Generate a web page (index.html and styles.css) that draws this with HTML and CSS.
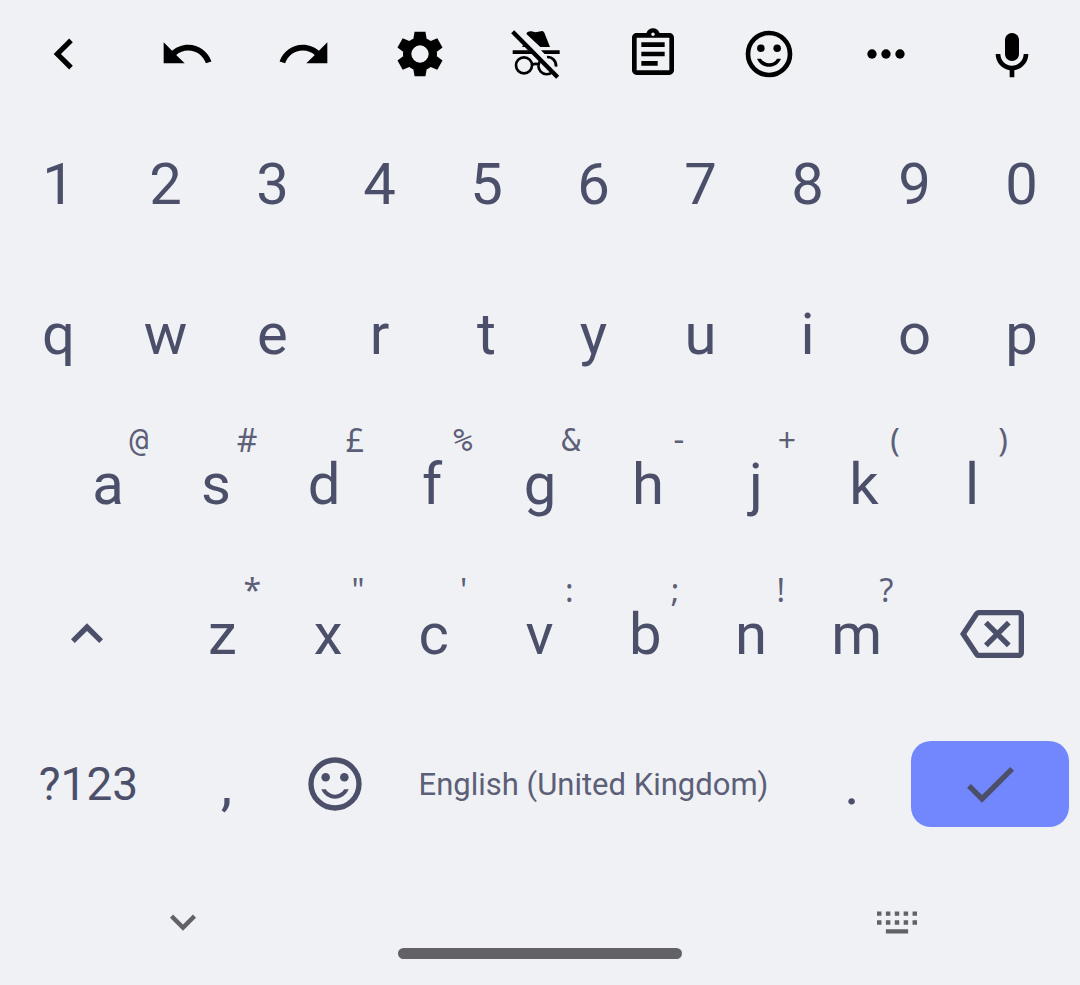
FILE: index.html
```html
<!DOCTYPE html>
<html lang="en-GB">
<head>
<meta charset="utf-8">
<meta name="viewport" content="width=device-width, initial-scale=1">
<title>Keyboard</title>
<link rel="stylesheet" href="styles.css">
</head>
<body>
<main class="keyboard">
  <div class="toolbar" role="toolbar" aria-label="Keyboard tools">
    <button class="tool" aria-label="Collapse toolbar"><svg class="icon icon-large" viewBox="0 0 24 24"><path d="M15.41 7.41 14 6l-6 6 6 6 1.41-1.41L10.83 12z"/></svg></button>
    <button class="tool" aria-label="Undo"><svg class="icon" viewBox="0 0 24 24"><path d="M12.5 8c-2.65 0-5.05.99-6.9 2.6L2 7v9h9l-3.62-3.62c1.39-1.16 3.16-1.88 5.12-1.88 3.54 0 6.55 2.31 7.6 5.5l2.37-.78C21.08 11.03 17.15 8 12.5 8z"/></svg></button>
    <button class="tool" aria-label="Redo"><svg class="icon" viewBox="0 0 24 24"><path d="M18.4 10.6C16.55 8.99 14.15 8 11.5 8c-4.65 0-8.58 3.03-9.96 7.22L3.9 16c1.05-3.19 4.05-5.5 7.6-5.5 1.95 0 3.73.72 5.12 1.88L13 16h9V7l-3.6 3.6z"/></svg></button>
    <button class="tool" aria-label="Settings"><svg class="icon" viewBox="-.3 -.3 24.6 24.6"><path fill-rule="evenodd" d="M9.600 2.200h4.800l.5 3.100c.7.3 1.300.6 1.800 1l2.900-1.200 2.300 4-2.500 1.900a7 7 0 0 1 0 2l2.500 1.900-2.300 4-2.900-1.200c-.5.4-1.100.8-1.800 1.100l-.5 3H9.600l-.5-3c-.7-.3-1.300-.7-1.800-1.100l-2.900 1.200-2.300-4L4.600 13a7 7 0 0 1 0-2L2.100 9.100l2.300-4 2.900 1.200c.5-.4 1.100-.7 1.800-1zM12 8.200a3.800 3.800 0 1 0 0 7.600 3.800 3.800 0 0 0 0-7.600z"/></svg></button>
    <button class="tool" aria-label="Incognito off"><svg class="icon" viewBox="444 78 168 168"><path d="M500 98Q506 92 514 94L527 97 542 94Q550 91 553 98L570 141H541L500 103zM486 140l8-8 9 9h-17z"/><path d="M458 151h53l11 11h-64zM543 151h56v11h-45z"/><g class="outline"><circle cx="492" cy="196" r="24"/><path d="M517 194q10-5 20 0M543 180a24 24 0 1 0 34 36M561 171a26 26 0 0 1 27 29"/></g><path class="slash" d="m458 95 135 137"/></svg></button>
    <button class="tool" aria-label="Clipboard"><svg class="icon" viewBox="0 0 24 24"><path d="M7 15h7v2H7zm0-4h10v2H7zm0-4h10v2H7z"/><path fill-rule="evenodd" d="M19 3h-4.180C14.400 1.840 13.300 1 12 1c-1.300 0-2.400.84-2.820 2H5c-1.100 0-2 .9-2 2v14c0 1.100.9 2 2 2h14c1.100 0 2-.9 2-2V5c0-1.100-.9-2-2-2zm-7-.25c.41 0 .75.34.75.75s-.34.75-.75.75-.75-.34-.75-.75.34-.75.75-.75zM19 19H5V5h14v14z"/></svg></button>
    <button class="tool" aria-label="Emoji"><svg class="icon" viewBox="0 0 24 24"><circle class="ring" cx="12" cy="12" r="9"/><circle cx="8.500" cy="9.500" r="1.600"/><circle cx="15.500" cy="9.500" r="1.600"/><path d="M12 16c-1.480 0-2.750-.81-3.450-2H6.880c.8 2.050 2.790 3.500 5.120 3.500s4.320-1.450 5.120-3.500h-1.670c-.7 1.190-1.970 2-3.450 2z"/></svg></button>
    <button class="tool" aria-label="More"><svg class="icon" viewBox="0 0 24 24"><circle cx="6" cy="12" r="2"/><circle cx="12" cy="12" r="2"/><circle cx="18" cy="12" r="2"/></svg></button>
    <button class="tool" aria-label="Voice input"><svg class="icon" viewBox="0 -1 24 24"><path d="M12 14c1.660 0 3-1.340 3-3V5c0-1.660-1.340-3-3-3S9 3.340 9 5v6c0 1.660 1.340 3 3 3z"/><path d="M17 11c0 2.760-2.240 5-5 5s-5-2.240-5-5H5c0 3.530 2.610 6.430 6 6.920V21h2v-3.080c3.390-.49 6-3.390 6-6.920h-2z"/></svg></button>
  </div>

  <div class="row row-ten">
    <button class="key">1</button><button class="key">2</button><button class="key">3</button><button class="key">4</button><button class="key">5</button><button class="key">6</button><button class="key">7</button><button class="key">8</button><button class="key">9</button><button class="key">0</button>
  </div>

  <div class="row row-ten">
    <button class="key">q</button><button class="key">w</button><button class="key">e</button><button class="key">r</button><button class="key">t</button><button class="key">y</button><button class="key">u</button><button class="key">i</button><button class="key">o</button><button class="key">p</button>
  </div>

  <div class="row row-home">
    <button class="key">a<span class="hint hint-mono">@</span></button>
    <button class="key">s<span class="hint">#</span></button>
    <button class="key">d<span class="hint">£</span></button>
    <button class="key">f<span class="hint hint-mono">%</span></button>
    <button class="key">g<span class="hint hint-mono">&amp;</span></button>
    <button class="key">h<span class="hint hint-mono">-</span></button>
    <button class="key">j<span class="hint">+</span></button>
    <button class="key">k<span class="hint">(</span></button>
    <button class="key">l<span class="hint">)</span></button>
  </div>

  <div class="row row-shift">
    <button class="key" aria-label="Shift"><svg class="icon icon-key" viewBox="0 0 24 24"><path d="m12 8-6 6 1.410 1.410L12 10.830l4.590 4.580L18 14z"/></svg></button>
    <button class="key">z<span class="hint">*</span></button>
    <button class="key">x<span class="hint">"</span></button>
    <button class="key">c<span class="hint">'</span></button>
    <button class="key">v<span class="hint">:</span></button>
    <button class="key">b<span class="hint">;</span></button>
    <button class="key">n<span class="hint">!</span></button>
    <button class="key">m<span class="hint">?</span></button>
    <button class="key" aria-label="Backspace"><svg class="icon icon-key" viewBox="0 0 24 24"><path fill-rule="evenodd" d="M22 3H7c-.69 0-1.230.35-1.590.88L0 12l5.410 8.110c.36.53.9.89 1.590.89h15c1.100 0 2-.9 2-2V5c0-1.100-.9-2-2-2zm0 16H7.070L2.400 12l4.660-7H22v14z"/><path d="M10.410 17 14 13.410 17.590 17 19 15.590 15.410 12 19 8.410 17.590 7 14 10.590 10.410 7 9 8.410 12.590 12 9 15.590z"/></svg></button>
  </div>

  <div class="row row-bottom">
    <button class="key key-symbols">?123</button>
    <button class="key">,</button>
    <button class="key" aria-label="Emoji keyboard"><svg class="icon icon-key" viewBox="0 0 24 24"><circle class="ring" cx="12" cy="12" r="9"/><circle cx="8.500" cy="9.500" r="1.600"/><circle cx="15.500" cy="9.500" r="1.600"/><path d="M12 16c-1.480 0-2.750-.81-3.450-2H6.880c.8 2.050 2.790 3.500 5.120 3.500s4.320-1.450 5.120-3.500h-1.670c-.7 1.190-1.970 2-3.450 2z"/></svg></button>
    <button class="key key-space">English (United Kingdom)</button>
    <button class="key">.</button>
    <button class="key key-enter" aria-label="Done"><svg class="icon icon-key" viewBox="0 0 24 24"><path d="M9 16.170 4.830 12l-1.420 1.410L9 19 21 7l-1.410-1.410z"/></svg></button>
  </div>

  <nav class="system-nav" aria-label="System navigation">
    <button class="nav-button" aria-label="Hide keyboard"><svg class="icon icon-nav" viewBox="0 0 24 24"><path d="M16.590 8.590 12 13.170 7.410 8.590 6 10l6 6 6-6z"/></svg></button>
    <span class="home-bar"></span>
    <button class="nav-button" aria-label="Switch keyboard"><svg class="icon icon-switch" viewBox="0 0 18 10"><path d="M0 0h2v2H0zM4 0h2v2H4zM8 0h2v2H8zM12 0h2v2h-2zM16 0h2v2h-2zM0 4h2v2H0zM4 4h2v2H4zM8 4h2v2H8zM12 4h2v2h-2zM16 4h2v2h-2zM4 8h10v2H4z"/></svg></button>
  </nav>
</main>
</body>
</html>
```

FILE: styles.css
```css
:root {
  --base: #eff1f5;
  --text: #4c4f69;
  --subtext: #5c5f77;
  --accent: #7287fd;
  --nav: #626266;
}

* {
  box-sizing: border-box;
}

body {
  margin: 0;
  background: var(--base);
  color: var(--text);
  font-family: Roboto, "Liberation Sans", sans-serif;
}

button {
  display: flex;
  align-items: center;
  justify-content: center;
  min-width: 0;
  margin: 0;
  padding: 0;
  border: 0;
  background: none;
  color: inherit;
  font: inherit;
  white-space: nowrap;
}

.keyboard {
  display: flex;
  flex-direction: column;
}

.toolbar {
  display: grid;
  grid-template-columns: 258fr repeat(7, 233fr) 272fr;
  height: 108px;
  margin-bottom: 1px;
  color: #000;
}

.row {
  display: grid;
  height: 150px;
  padding: 0 5px;
}

.row-ten {
  grid-template-columns: repeat(10, 1fr);
}

.row-home {
  grid-template-columns: repeat(9, 1fr);
  padding: 0 5%;
}

.row-shift {
  grid-template-columns: 165fr repeat(7, 106fr) 165fr;
  padding-right: 6px;
}

.row-bottom {
  grid-template-columns: 167fr 109fr 108fr 409fr 108fr 168fr;
  padding-right: 6px;
}

.key {
  position: relative;
  font-size: 58px;
}

.key-symbols {
  font-size: 46px;
}

.key-space {
  color: var(--subtext);
  font-size: 31px;
}

.key-enter {
  align-self: center;
  height: 86px;
  margin: 0 5px;
  border-radius: 20px;
  background: var(--accent);
}

.hint {
  position: absolute;
  top: 12px;
  right: 13px;
  display: flex;
  justify-content: center;
  width: 20px;
  color: var(--subtext);
  font-family: "Noto Sans", sans-serif;
  font-size: 32px;
  line-height: 38px;
}

.hint-mono {
  font-family: "DejaVu Sans Mono", monospace;
}

.icon {
  display: block;
  width: 56px;
  height: 56px;
  fill: currentColor;
}

.icon-large {
  width: 62px;
  height: 62px;
}

.icon-key {
  width: 64px;
  height: 64px;
}

.icon-nav {
  width: 52px;
  height: 52px;
}

.icon-switch {
  width: 40px;
  height: 23px;
}

.ring {
  fill: none;
  stroke: currentColor;
  stroke-width: 2;
}

.outline {
  fill: none;
  stroke: currentColor;
  stroke-width: 8;
}

.slash {
  stroke: currentColor;
  stroke-width: 13;
}

.system-nav {
  display: grid;
  grid-template-columns: 366fr 348fr 366fr;
  height: 126px;
  color: var(--nav);
}

.home-bar {
  align-self: end;
  height: 11px;
  margin: 0 32px 26px;
  border-radius: 6px;
  background: currentColor;
}
```
